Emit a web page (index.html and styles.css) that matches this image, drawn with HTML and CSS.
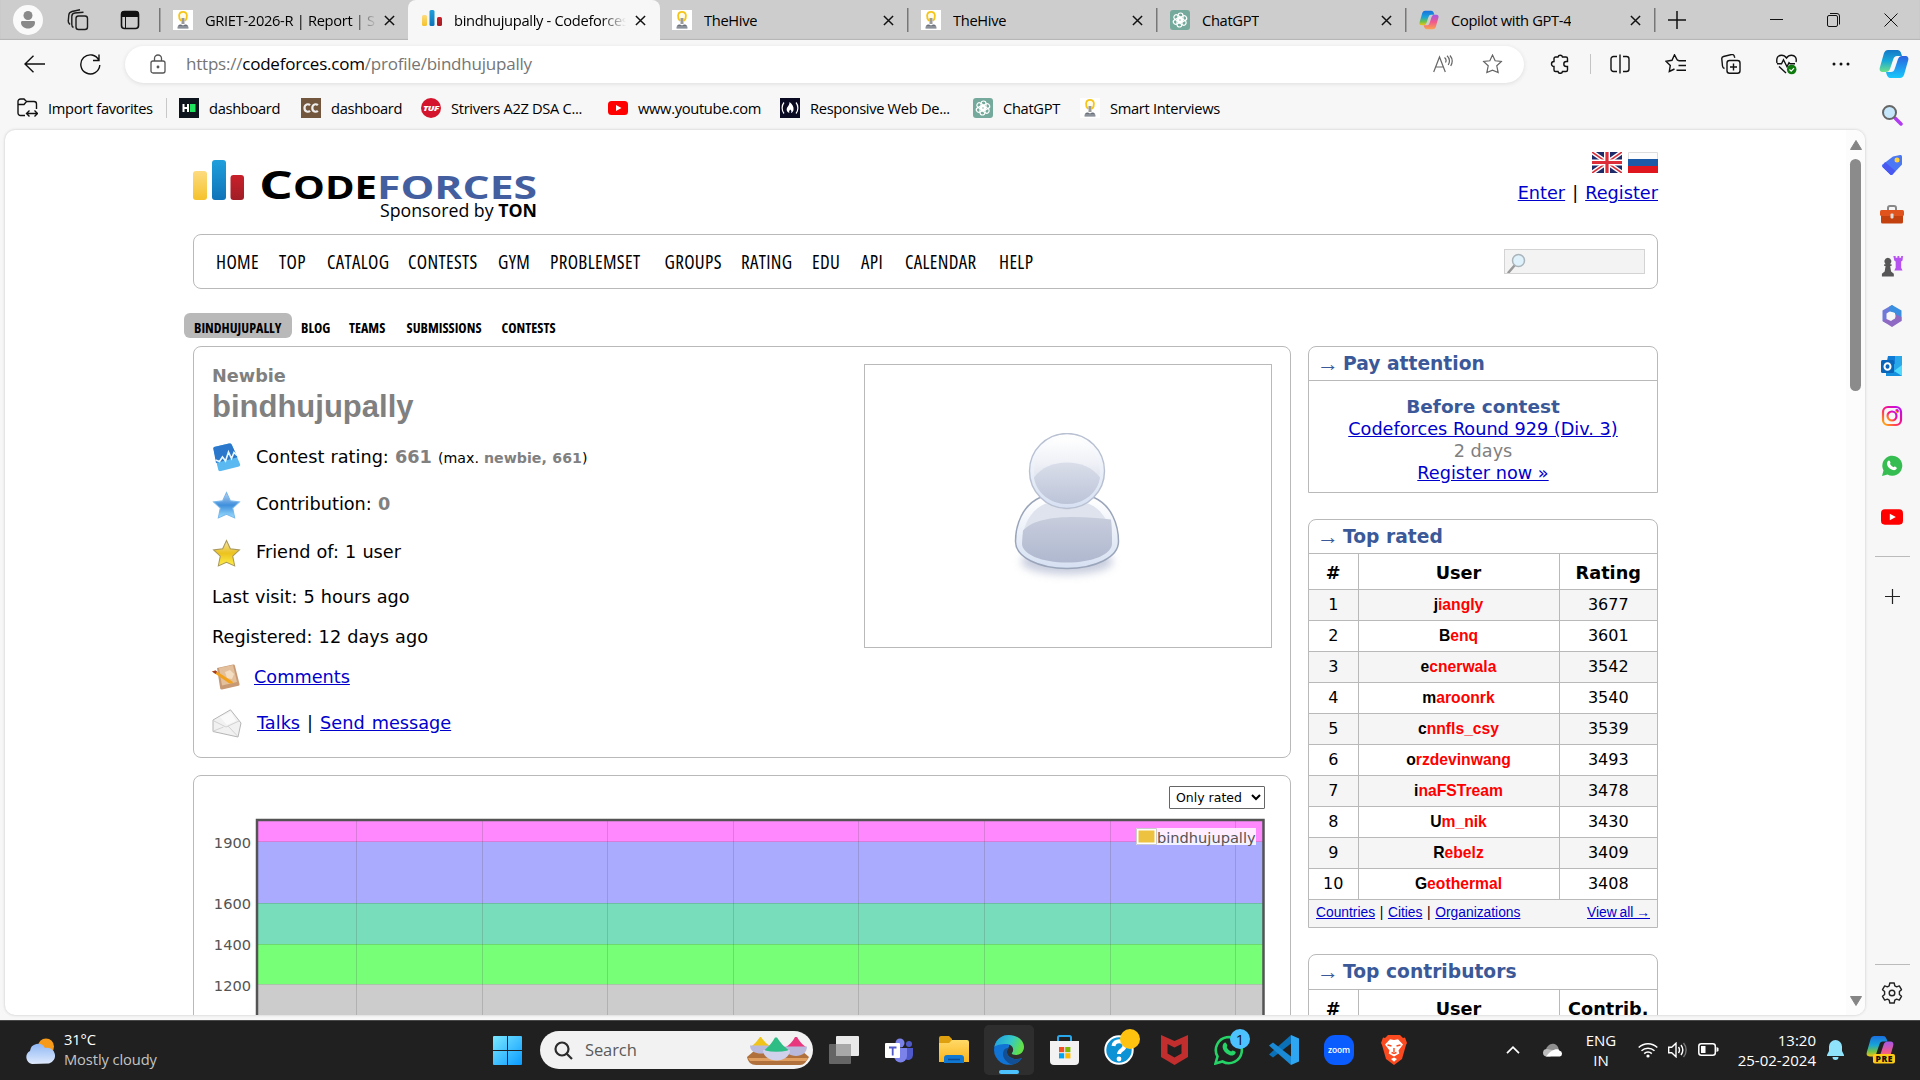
FILE: index.html
```html
<!DOCTYPE html>
<html lang="en">
<head>
<meta charset="utf-8">
<title>bindhujupally - Codeforces</title>
<link rel="stylesheet" href="styles.css">
</head>
<body>
<svg class="defs" width="0" height="0">
  <defs>
    <linearGradient id="gBlue" x1="0" y1="0" x2="0" y2="1"><stop offset="0" stop-color="#1f9fdc"/><stop offset="1" stop-color="#0f73b8"/></linearGradient>
    <linearGradient id="gYellow" x1="0" y1="0" x2="0" y2="1"><stop offset="0" stop-color="#fddb80"/><stop offset="1" stop-color="#f5c22b"/></linearGradient>
    <linearGradient id="gRed" x1="0" y1="0" x2="0" y2="1"><stop offset="0" stop-color="#c9202a"/><stop offset="1" stop-color="#a01e26"/></linearGradient>
    <linearGradient id="gCopA" x1="0" y1="0" x2="0" y2="1"><stop offset="0" stop-color="#1a6fe0"/><stop offset=".45" stop-color="#18a5d8"/><stop offset=".75" stop-color="#6fc04a"/><stop offset="1" stop-color="#f2c512"/></linearGradient>
    <linearGradient id="gCopB" x1="0" y1="0" x2="0" y2="1"><stop offset="0" stop-color="#a457e8"/><stop offset=".5" stop-color="#f0598c"/><stop offset="1" stop-color="#fba34f"/></linearGradient>
    <linearGradient id="gCopC" x1="0" y1="0" x2="0" y2="1"><stop offset="0" stop-color="#1277c8"/><stop offset=".5" stop-color="#18a9d8"/><stop offset="1" stop-color="#6fe08a"/></linearGradient>
    <linearGradient id="gCopD" x1="0" y1="0" x2="0" y2="1"><stop offset="0" stop-color="#2b63e0"/><stop offset="1" stop-color="#18c8fb"/></linearGradient>
    <linearGradient id="gIg" x1="0" y1="1" x2="1" y2="0"><stop offset="0" stop-color="#ffb800"/><stop offset=".5" stop-color="#ff1080"/><stop offset="1" stop-color="#b010ff"/></linearGradient>
    <linearGradient id="gWin" x1="0" y1="0" x2="1" y2="1"><stop offset="0" stop-color="#7be8ff"/><stop offset="1" stop-color="#0a9bff"/></linearGradient>
    <linearGradient id="gStarB" x1="0" y1="0" x2="0" y2="1"><stop offset="0" stop-color="#bcd3f0"/><stop offset=".5" stop-color="#3f8fdc"/><stop offset="1" stop-color="#9be0ff"/></linearGradient>
    <linearGradient id="gStarY" x1="0" y1="0" x2="0" y2="1"><stop offset="0" stop-color="#f2e6a8"/><stop offset=".5" stop-color="#ecc21e"/><stop offset="1" stop-color="#fff04a"/></linearGradient>
    <linearGradient id="gHead" x1="0" y1="0" x2="0" y2="1"><stop offset="0" stop-color="#fff"/><stop offset=".4" stop-color="#eef0f6"/><stop offset="1" stop-color="#c6cde0"/></linearGradient>
    <linearGradient id="gHeadLow" x1="0" y1="0" x2="0" y2="1"><stop offset="0" stop-color="#dadeea"/><stop offset="1" stop-color="#bcc4d8"/></linearGradient>
    <linearGradient id="gBody" x1="0" y1="0" x2="0" y2="1"><stop offset="0" stop-color="#c8cddd"/><stop offset="1" stop-color="#afb8cf"/></linearGradient>
    <linearGradient id="gRim" x1="0" y1="0" x2="0" y2="1"><stop offset="0" stop-color="#fff"/><stop offset="1" stop-color="#d5e0f2"/></linearGradient>
    <linearGradient id="gCloud" x1="0" y1="0" x2="0" y2="1"><stop offset="0" stop-color="#8fb7f5"/><stop offset="1" stop-color="#dfeafd"/></linearGradient>
    <linearGradient id="gFolder" x1="0" y1="0" x2="0" y2="1"><stop offset="0" stop-color="#ffd968"/><stop offset="1" stop-color="#f9b51c"/></linearGradient>
    <linearGradient id="gEdge" x1="0" y1="0" x2="1" y2=".3"><stop offset="0" stop-color="#1f9be0"/><stop offset=".6" stop-color="#35c8c8"/><stop offset="1" stop-color="#62e04a"/></linearGradient>
    <filter id="soft" x="-30%" y="-100%" width="160%" height="300%"><feGaussianBlur stdDeviation="4"/></filter>
    <symbol id="bulb" viewBox="0 0 20 20"><path fill="#fff" d="M0 0h20v20H0z"/><path d="M8 11C5.300 8 5 1.800 10 1.800S14.700 8 12 11" fill="#fffbe8" stroke="#f5c518" stroke-width="1.800"/><path d="M8.500 8h3v6h-3z" fill="#9a9a9a"/><path d="M4.500 18.500c0-3 1.500-4.500 3.500-4l2 1 2-1c2-.5 3.500 1 3.500 4z" fill="#6c727c"/><path d="M5 17h10" stroke="#a8adb5"/></symbol>
    <symbol id="gpt" viewBox="0 0 20 20"><rect width="20" height="20" rx="3" fill="#75a99b"/><g fill="none" stroke="#fff" stroke-width="1.200"><g id="petal"><rect x="8" y="3" width="5" height="8.500" rx="2.500"/></g><use href="#petal" transform="rotate(60 10 10)"/><use href="#petal" transform="rotate(120 10 10)"/><use href="#petal" transform="rotate(180 10 10)"/><use href="#petal" transform="rotate(240 10 10)"/><use href="#petal" transform="rotate(300 10 10)"/></g></symbol>
    <symbol id="copilot" viewBox="0 0 30 30"><path d="M9 1h9c3 0 4 2 5 6h-5c-2 0-3 1-4 4l-3 9c-1 2-2 3-4 3H4c-3 0-4-2-3-5L5 4c1-2 2-3 4-3z" fill="url(#gCopA)"/><path d="M21 29h-9c-3 0-4-2-5-6h5c2 0 3-1 4-4l3-9c1-2 2-3 4-3h3c3 0 4 2 3 5l-4 14c-1 2-2 3-4 3z" fill="url(#gCopB)"/></symbol>
    <symbol id="copilotBlue" viewBox="0 0 30 30"><path d="M9 1h9c3 0 4 2 5 6h-5c-2 0-3 1-4 4l-3 9c-1 2-2 3-4 3H4c-3 0-4-2-3-5L5 4c1-2 2-3 4-3z" fill="url(#gCopC)"/><path d="M21 29h-9c-3 0-4-2-5-6h5c2 0 3-1 4-4l3-9c1-2 2-3 4-3h3c3 0 4 2 3 5l-4 14c-1 2-2 3-4 3z" fill="url(#gCopD)"/></symbol>
    <symbol id="yt" viewBox="0 0 20 20"><rect y="3" width="20" height="14" rx="3.500" fill="red"/><path d="M8 7l5.500 3L8 13z" fill="#fff"/></symbol>
    <symbol id="x" viewBox="0 0 12 12"><path d="M1 1l10 10M11 1L1 11" stroke="#111" stroke-width="1.600" fill="none"/></symbol>
    <symbol id="star" viewBox="0 0 28 28"><path d="M14 1.500l3.700 8 8.800 1-6.500 6 1.900 9.500-7.900-3.500L6.100 26 8 16.500l-6.500-6 8.800-1z"/></symbol>
  </defs>
</svg>

<div class="tabs">
  <div class="tabtools">
    <svg width="30" height="30" viewBox="0 0 30 30"><circle cx="15" cy="15" r="15" fill="#fafafa"/><circle cx="15" cy="10.500" r="4.500" fill="#8a8a8a"/><path d="M8 17.500c0-1 .5-1.500 1.500-1.500h11c1 0 1.500.5 1.500 1.500 0 3.500-3 6-7 6s-7-2.500-7-6z" fill="#8a8a8a"/></svg>
    <svg class="t2" width="22" height="22" viewBox="0 0 22 22" fill="none" stroke="#1c1c1c" stroke-width="1.400"><rect x="9" y="7" width="11.500" height="13.500" rx="2.500"/><path d="M6.500 18.500c-1.300-.6-1.700-1.500-1.700-3V7.500c0-2.600 1.200-3.300 3-3.500l8.700-.7M3 15.500l-1-1.300a3 3 0 0 1-.7-2.500l.5-5.700c.2-2.400 1.500-3 3.200-3.500L13 .8"/></svg>
    <svg class="t3" width="20" height="20" viewBox="0 0 20 20"><rect x="1.500" y="1.500" width="17" height="17" rx="3" fill="none" stroke="#111" stroke-width="1.600"/><path d="M1 7V4a3 3 0 0 1 3-3h12a3 3 0 0 1 3 3v3z" fill="#111"/><path d="M5.500 7v11" stroke="#111"/></svg>
  </div>
  <div class="tab first"><svg width="20" height="20"><use href="#bulb"/></svg><span class="fade">GRIET-2026-R | Report | S</span><svg class="cl" width="11" height="11"><use href="#x"/></svg></div>
  <div class="tab active"><svg width="20" height="20" viewBox="0 0 20 20"><rect y="5" width="5" height="11" rx="1.500" fill="url(#gYellow)"/><rect x="7.500" width="5" height="16" rx="1.500" fill="url(#gBlue)"/><rect x="15" y="7" width="5" height="9" rx="1.500" fill="url(#gRed)"/></svg><span class="fade">bindhujupally - Codeforces</span><svg class="cl" width="11" height="11"><use href="#x"/></svg></div>
  <div class="tab"><svg width="20" height="20"><use href="#bulb"/></svg><span>TheHive</span><svg class="cl" width="11" height="11"><use href="#x"/></svg></div>
  <div class="tab sep"><svg width="20" height="20"><use href="#bulb"/></svg><span>TheHive</span><svg class="cl" width="11" height="11"><use href="#x"/></svg></div>
  <div class="tab sep"><svg width="20" height="20"><use href="#gpt"/></svg><span>ChatGPT</span><svg class="cl" width="11" height="11"><use href="#x"/></svg></div>
  <div class="tab sep"><svg width="20" height="20"><use href="#copilot"/></svg><span>Copilot with GPT-4</span><svg class="cl" width="11" height="11"><use href="#x"/></svg></div>
  <div class="newtab"><svg width="18" height="18" viewBox="0 0 18 18" stroke="#111" stroke-width="1.500"><path d="M9 0v18M0 9h18"/></svg></div>
  <div class="wincontrols">
    <svg width="13" height="14" viewBox="0 0 13 14" stroke="#111"><path d="M0 6.500h13"/></svg>
    <svg width="13" height="14" viewBox="0 0 13 14" fill="none" stroke="#111"><rect x=".5" y="2.500" width="10" height="11" rx="1.500"/><path d="M3 .5h7a2.500 2.500 0 0 1 2.500 2.500v8.500"/></svg>
    <svg width="14" height="14" viewBox="0 0 14 14" stroke="#111"><path d="M.5.500l13 13M13.500.500l-13 13"/></svg>
  </div>
</div>

<div class="toolbar">
  <svg class="back" width="21" height="18" viewBox="0 0 21 18" fill="none" stroke="#111" stroke-width="1.400"><path d="M21 9H1M9.500.700L1 9l8.500 8.300"/></svg>
  <svg class="reload" width="22" height="22" viewBox="0 0 22 22" fill="none" stroke="#111" stroke-width="1.400"><path d="M20 7.500A9.500 9.500 0 1 0 20.800 12M20 1.500v6h-6"/></svg>
  <div class="address">
    <svg width="16" height="20" viewBox="0 0 16 20" fill="none" stroke="#555" stroke-width="1.300"><rect x="1" y="7" width="14" height="12" rx="2"/><path d="M4.500 7V4.500a3.500 3.500 0 0 1 7 0V7"/><circle cx="8" cy="13" r=".8" fill="#555"/></svg>
    <span class="url">https://<b>codeforces.com</b>/profile/bindhujupally</span>
    <svg width="20" height="18" viewBox="0 0 20 18" fill="none" stroke="#666" stroke-width="1.200"><path d="M.700 17L6.500 2l5.800 15M2.800 12h7.500M11.500 2.500c1.500 1.200 1.800 3.500 1 5M14 .8c2.500 2.200 3 6 1.200 9.200M17 .5c2.500 3 2.800 7 .7 10.500"/></svg>
    <svg class="fav" width="21" height="20" viewBox="0 0 28 28" fill="none" stroke="#666" stroke-width="1.700"><use href="#star"/></svg>
  </div>
  <div class="tools">
    <svg width="20" height="20" viewBox="0 0 20 20" fill="none" stroke="#111" stroke-width="1.400"><path d="M6 3h2a2.300 2.300 0 0 1 4.500 0H16a1.500 1.500 0 0 1 1.500 1.500V7.500h-1.200a2.500 2.500 0 0 0 0 5h1.200v3.500a1.500 1.500 0 0 1-1.500 1.500h-3.500a2.300 2.300 0 0 1-4.500 0H5.500A1.500 1.500 0 0 1 4 16v-3.500a2.500 2.500 0 0 1 0-5v-3A1.500 1.500 0 0 1 5.500 3z"/></svg>
    <i></i>
    <svg width="20" height="20" viewBox="0 0 20 20" fill="none" stroke="#111" stroke-width="1.400"><path d="M7 2.500H3.500A2.500 2.500 0 0 0 1 5v10a2.500 2.500 0 0 0 2.500 2.500H7M13 2.500h3.500A2.500 2.500 0 0 1 19 5v10a2.500 2.500 0 0 1-2.500 2.500H13M10 .5v19"/></svg>
    <svg class="w" width="22" height="20" viewBox="0 0 22 20" fill="none" stroke="#111" stroke-width="1.400"><path d="M13.500 6.500L12.300 6 9.500.800 7 6.300 1 7.200l4.300 4.200-1 6.100L9.500 15M13.500 6.800H21M13.500 11.500H21M11.500 16.200H21"/></svg>
    <svg class="w2" width="20" height="20" viewBox="0 0 20 20" fill="none" stroke="#111" stroke-width="1.400"><rect x="6" y="6.500" width="13" height="12.800" rx="2.500"/><path d="M12.500 9.500v7M9 13h7M3.500 14.500a3 3 0 0 1-2-2.500L.800 5A2.300 2.300 0 0 1 2.500 2.500l8-2a2.300 2.300 0 0 1 2.800 1.700l.5 1.500"/></svg>
    <svg class="w3" width="21" height="21" viewBox="0 0 21 21" fill="none" stroke="#111" stroke-width="1.400"><path d="M1 9C0 4 2 1.200 5.500 1.200c2.300 0 4 1.300 5 2.800 1-1.500 2.700-2.800 5-2.800C19 1.200 21 4 20 8M3 12.500L10 19M1 9.800h4.500l2-4 3.500 7 2-4 1 1h5"/><circle cx="15.700" cy="15.500" r="4.800" fill="#0f7b0f" stroke="none"/><path d="M13.500 15.500l1.700 1.600 2.800-3" stroke="#fff" stroke-width="1.200"/></svg>
    <svg class="w4" width="18" height="20" viewBox="0 0 18 20" fill="#111"><circle cx="2" cy="10" r="1.500"/><circle cx="9" cy="10" r="1.500"/><circle cx="16" cy="10" r="1.500"/></svg>
    <svg class="w5" width="30" height="30"><use href="#copilotBlue"/></svg>
  </div>
</div>

<div class="bookmarks">
  <div class="bm imp"><svg width="21" height="20" viewBox="0 0 21 20" fill="none" stroke="#111" stroke-width="1.400"><path d="M8 17.500H3.500A2.500 2.500 0 0 1 1 15V3.500A2.500 2.500 0 0 1 3.500 1H7l2.500 2.500H17A2.500 2.500 0 0 1 19.500 6v5M1 6.500h6l2.500-3M10 15.500h10M12.500 12.500l-3 3 3 3M17.500 12.500l3 3-3 3"/></svg><span>Import favorites</span></div>
  <div class="bm b1"><svg width="20" height="20" viewBox="0 0 20 20"><path fill="#0e141e" d="M0 0h20v20H0z"/><path fill="#fff" d="M3.500 6h2v3h2.500V6h2v8H8v-3H5.500v3h-2z"/><path fill="#1fe25f" d="M11 6h5.500v8H11z"/></svg><span>dashboard</span></div>
  <div class="bm b2"><svg width="20" height="20" viewBox="0 0 20 20"><path fill="#73563e" d="M0 0h20v20H0z"/><g fill="none" stroke="#eee" stroke-width="2.200"><path d="M9 7.300C7.500 5.500 3.500 6 3.500 10s4 4.500 5.500 2.700M16.800 7.300C15.300 5.500 11.300 6 11.300 10s4 4.500 5.500 2.700"/></g></svg><span>dashboard</span></div>
  <div class="bm b3"><svg width="20" height="20" viewBox="0 0 20 20"><circle cx="10" cy="10" r="10" fill="#d4142c"/><text x="2" y="12.500" font-family="Open Sans" font-size="7" font-weight="800" font-style="italic" fill="#fff" textLength="16" lengthAdjust="spacingAndGlyphs">TUF</text></svg><span>Strivers A2Z DSA C...</span></div>
  <div class="bm b4"><svg width="20" height="20"><use href="#yt"/></svg><span>www.youtube.com</span></div>
  <div class="bm b5"><svg width="20" height="20" viewBox="0 0 20 20"><path fill="#0a0a23" d="M0 0h20v20H0z"/><path d="M4 4.500c-2.500 3-2.500 8 0 11M16 4.500c2.500 3 2.500 8 0 11" fill="none" stroke="#fff" stroke-width="1.200"/><path d="M9.500 4c3 2 4.500 5 4 8-.3 1.600-1.500 2.800-2.500 3 1-2 0-3-1-3.500-.5 1.500-1.500 2-.5 3.500-3-1-3.500-4-2-6C9 7 9.500 6 9.500 4z" fill="#fff"/></svg><span>Responsive Web De...</span></div>
  <div class="bm b6"><svg width="20" height="20"><use href="#gpt"/></svg><span>ChatGPT</span></div>
  <div class="bm b7"><svg width="20" height="20"><use href="#bulb"/></svg><span>Smart Interviews</span></div>
</div>

<div class="main">
  <div class="page">
    <div class="content">
      <header class="head">
        <svg width="345" height="66" viewBox="0 0 345 66">
          <rect x="0" y="14" width="14" height="29" rx="3" fill="url(#gYellow)"/><rect x="19" y="3" width="14" height="40" rx="3" fill="url(#gBlue)"/><rect x="37.500" y="18" width="13.500" height="25" rx="3" fill="url(#gRed)"/>
          <g font-family="Open Sans, sans-serif" font-weight="700"><text x="66" y="41.500" font-size="38.500" textLength="34" lengthAdjust="spacingAndGlyphs">C</text><text x="100" y="41.500" font-size="32" textLength="84" lengthAdjust="spacingAndGlyphs">ODE</text><text x="184" y="41.500" font-size="32" fill="#445fa0" textLength="160" lengthAdjust="spacingAndGlyphs">FORCES</text></g>
          <text x="187" y="59.500" font-family="Open Sans, sans-serif" font-size="17.500" textLength="157" lengthAdjust="spacingAndGlyphs">Sponsored by <tspan font-weight="700">TON</tspan></text>
        </svg>
        <div class="auth">
          <div class="flags">
            <svg width="30" height="21" viewBox="0 0 30 21"><path fill="#1f2a68" d="M0 0h30v21H0z"/><path d="M0 0l30 21M30 0L0 21" stroke="#fff" stroke-width="4.500"/><path d="M0 0l30 21M30 0L0 21" stroke="#d8303a" stroke-width="1.600"/><path d="M15 0v21M0 10.500h30" stroke="#fff" stroke-width="6"/><path d="M15 0v21M0 10.500h30" stroke="#dc2d38" stroke-width="3.200"/></svg>
            <svg width="30" height="21" viewBox="0 0 30 21"><path fill="#fdfdfd" stroke="#ddd" d="M.5.500h29v20H.5z"/><path fill="#1c5aa8" d="M0 7h30v7H0z"/><path fill="#e0161e" d="M0 14h30v7H0z"/></svg>
          </div>
          <div class="links"><a>Enter</a> | <a>Register</a></div>
        </div>
      </header>
      <nav class="menu">
        <a class="m1">HOME</a><a class="m2">TOP</a><a class="m3">CATALOG</a><a class="m4">CONTESTS</a><a class="m5">GYM</a><a class="m6">PROBLEMSET</a><a class="m7">GROUPS</a><a class="m8">RATING</a><a class="m9">EDU</a><a class="m10">API</a><a class="m11">CALENDAR</a><a class="m12">HELP</a>
        <div class="search"><svg width="20" height="20" viewBox="0 0 20 20"><path d="M1.500 19.500l6-7" stroke="#999" stroke-width="2.500" stroke-linecap="round"/><circle cx="11.500" cy="7.500" r="6" fill="#dff2fc" stroke="#aab4ba" stroke-width="1.500"/></svg></div>
      </nav>
      <nav class="sub"><a class="on">BINDHUJUPALLY</a><a class="s2">BLOG</a><a class="s3">TEAMS</a><a class="s4">SUBMISSIONS</a><a class="s5">CONTESTS</a></nav>
      <div class="cols">
        <div class="left">
          <section class="card profile">
            <div class="info">
              <div class="rank">Newbie</div>
              <div class="name">bindhujupally</div>
              <div class="row"><svg width="29" height="29" viewBox="0 0 29 29"><path d="M1.500 6.500C1 5 1.500 4 3 3.700L17 .5c1.500-.3 2.500.3 3 1.700L28 21c.5 1.300 0 2-1 2.500L9 28c-1.500.4-2.500 0-2.800-1.500z" fill="#59b9f0"/><path d="M1.500 6.500C1 5 1.500 4 3 3.700L17 .5c1.500-.3 2.500.3 3 1.700l5.500 12L4 20z" fill="#2a77cb"/><path d="M3.500 17l4 1.500 3-4.500 3 4 3-9 3 6.500 2.500-6 3 3" fill="none" stroke="#e8f8ff" stroke-width="1.600"/></svg><span>Contest rating: <b>661</b> <small>(max. <b>newbie, 661</b>)</small></span></div>
              <div class="row"><svg width="29" height="29" viewBox="0 0 28 28" fill="url(#gStarB)" stroke="#7ab8ec"><use href="#star"/></svg><span class="up">Contribution: <b>0</b></span></div>
              <div class="row"><svg width="29" height="29" viewBox="0 0 28 28" fill="url(#gStarY)" stroke="#a8975a"><use href="#star"/></svg><span class="up">Friend of: 1 user</span></div>
              <div class="line">Last visit: 5 hours ago</div>
              <div class="line">Registered: 12 days ago</div>
              <div class="row cm"><svg width="29" height="26" viewBox="0 0 29 26"><path d="M5 4l16-3.500c1-.2 1.700.2 2 1.500l4.500 18c.2 1-.2 1.600-1 1.800L10 25.500c-1 .2-1.600-.2-1.800-1z" fill="#c79a75"/><path d="M7 4l14-3 4 17-15 3.500z" fill="#e3c09b"/><path d="M13 8l5-2 4 4-2 5-5-1z" fill="#f3dec4"/><path d="M0 7.500l3.500-1L21 18l-1 1.800-3-.5z" fill="#f2a11c"/><path d="M0 7.500l3.500-1 1.500 1L3.500 10z" fill="#a33b2a"/></svg><span><a>Comments</a></span></div>
              <div class="row tk"><svg width="30" height="29" viewBox="0 0 30 29" stroke="#b5b5b5"><path d="M1 11L18.500.800 29 14l-3 14L1 22.500z" fill="#f1f1f1"/><path d="M2 12l12 6 13-6M1.500 22l10-4M25.500 27L16 17" fill="none" stroke="#d2d2d2"/><path d="M8 8l11-5 5 9-9 4z" fill="#fafafa" stroke="none"/></svg><span class="links"><a>Talks</a> | <a>Send message</a></span></div>
            </div>
            <div class="avatar">
              <svg width="130" height="160" viewBox="0 -4.500 130 160">
                <ellipse cx="65" cy="124" rx="46" ry="13" fill="#aab2cc" opacity=".65" filter="url(#soft)"/>
                <path d="M38 60C20 68 13.500 88 13.500 104c0 16 24 27 51.500 27s51.500-11 51.500-27c0-16-6.500-36-24.500-44z" fill="url(#gRim)" stroke="#9aa5ba" stroke-width="1.500"/>
                <path d="M44 66C28 72 20 90 20 106c0 11 20 19 45 19s45-8 45-19c0-16-8-34-24-40z" fill="#dfe3ed"/>
                <path d="M21 93c14-16 55-15 88-11 1 7 1 15 1 24 0 11-20 19-45 19s-45-8-45-19z" fill="url(#gBody)"/>
                <circle cx="65" cy="33.500" r="37.500" fill="url(#gRim)" stroke="#b8c0d2" stroke-width="1.400"/>
                <circle cx="65" cy="33.500" r="33" fill="url(#gHead)"/>
                <path d="M32 40c14-20 52-20 66 0-2 15-16 26.500-33 26.500S34 55 32 40z" fill="url(#gHeadLow)"/>
              </svg>
            </div>
          </section>
          <section class="card graph">
            <select><option>Only rated</option></select>
            <svg class="plot" width="1096" height="200" viewBox="194 818 1096 200">
              <path fill="#f8f" d="M257 820h1007v22H257z"/><path fill="#aaf" d="M257 842h1007v61H257z"/><path fill="#77ddbb" d="M257 903h1007v41H257z"/><path fill="#7f7" d="M257 944h1007v40.500H257z"/><path fill="#ccc" d="M257 984.500h1007v40H257z"/>
              <path d="M356.500 820v200M482.500 820v200M607.500 820v200M733.500 820v200M858.500 820v200M984.500 820v200M1110.500 820v200M1235.500 820v200M257 841.500h1007M257 903.500h1007M257 944.500h1007M257 984.500h1007" stroke="#545454" stroke-opacity=".22" fill="none"/>
              <path d="M257 1020V820h1006.500v200" fill="none" stroke="#545454" stroke-width="2.500"/>
              <path fill="#fff" fill-opacity=".85" d="M1136 828h120v17h-120z"/><path d="M1136.500 828.500h20v16h-20z" fill="#fff" stroke="#ccc"/><path fill="#edc240" d="M1138.500 830.500h16v12h-16z"/>
              <g fill="#545454" font-family="DejaVu Sans, sans-serif" font-size="14.600"><text x="1157" y="843">bindhujupally</text><g text-anchor="end"><text x="251" y="848">1900</text><text x="251" y="909">1600</text><text x="251" y="950">1400</text><text x="251" y="991">1200</text></g></g>
            </svg>
          </section>
        </div>
        <aside class="right">
          <div class="box attention">
            <h3><i>→</i>Pay attention</h3>
            <div class="body"><strong>Before contest</strong><a>Codeforces Round 929 (Div. 3)</a><em>2 days</em><a>Register now »</a></div>
          </div>
          <div class="box rated">
            <h3><i>→</i>Top rated</h3>
            <table>
              <tr><th class="n">#</th><th>User</th><th class="r">Rating</th></tr>
              <tr><td>1</td><td class="u"><b>j</b>iangly</td><td>3677</td></tr>
              <tr><td>2</td><td class="u"><b>B</b>enq</td><td>3601</td></tr>
              <tr><td>3</td><td class="u"><b>e</b>cnerwala</td><td>3542</td></tr>
              <tr><td>4</td><td class="u"><b>m</b>aroonrk</td><td>3540</td></tr>
              <tr><td>5</td><td class="u"><b>c</b>nnfls_csy</td><td>3539</td></tr>
              <tr><td>6</td><td class="u"><b>o</b>rzdevinwang</td><td>3493</td></tr>
              <tr><td>7</td><td class="u"><b>i</b>naFSTream</td><td>3478</td></tr>
              <tr><td>8</td><td class="u"><b>U</b>m_nik</td><td>3430</td></tr>
              <tr><td>9</td><td class="u"><b>R</b>ebelz</td><td>3409</td></tr>
              <tr><td>10</td><td class="u"><b>G</b>eothermal</td><td>3408</td></tr>
            </table>
            <div class="foot"><span><a>Countries</a> | <a>Cities</a> | <a>Organizations</a></span><a>View all →</a></div>
          </div>
          <div class="box contrib">
            <h3><i>→</i>Top contributors</h3>
            <table><tr><th class="n">#</th><th>User</th><th class="r">Contrib.</th></tr></table>
          </div>
        </aside>
      </div>
    </div>
    <div class="scroll">
      <svg width="12" height="10" viewBox="0 0 12 10"><path d="M6 .5L11.500 9.500H.5z" fill="#858585" stroke="#858585" stroke-linejoin="round"/></svg>
      <div class="thumb"></div>
      <svg width="12" height="10" viewBox="0 0 12 10"><path d="M6 9.500L11.500.5H.5z" fill="#858585" stroke="#858585" stroke-linejoin="round"/></svg>
    </div>
  </div>
  <div class="side">
    <svg width="22" height="22" viewBox="0 0 22 22"><path d="M14 14l6 6" stroke="#b03bf0" stroke-width="3.500" stroke-linecap="round"/><circle cx="8.500" cy="8.500" r="6.500" fill="#c5e6fb" stroke="#666" stroke-width="2"/></svg>
    <svg width="22" height="22" viewBox="0 0 22 22"><path d="M12 2.500l7-1.500c1.500 0 2 .5 2 2v7.500L11.500 20.500c-.8.800-1.500.8-2.300 0L1.500 13c-.8-.8-.8-1.700 0-2.500z" fill="#4a78f5"/><path d="M1.500 13l7.700 7.500c.8.800 1.500.8 2.300 0l3-3.500L4 8z" fill="#4a58f2"/><circle cx="16" cy="6" r="2.500" fill="#ffd23c"/></svg>
    <svg width="24" height="20" viewBox="0 0 24 20"><path d="M8 5V3a2 2 0 0 1 2-2h4a2 2 0 0 1 2 2v2" fill="none" stroke="#888" stroke-width="2"/><rect x="1" y="9" width="22" height="9.500" rx="1.500" fill="#c2410f"/><rect y="5" width="24" height="6" rx="1.500" fill="#e0531c"/><rect x="10.500" y="8.500" width="3" height="5" rx="1" fill="#ddd"/></svg>
    <svg width="24" height="24" viewBox="0 0 24 24"><path d="M13.500 1h2.500v2h2V1h2v2h2V1h2l-.5 5-1.500 1v7l1.500 3h-9l1.500-3V7l-1.500-1z" fill="#b653f0"/><path d="M7.500 3a4 4 0 0 1 2.500 7h1.500v2H10l1 6 3 2.500v3H1v-3L4 18l1-6H3.500v-2H5a4 4 0 0 1 2.500-7z" fill="#565656"/></svg>
    <svg width="22" height="22" viewBox="0 0 22 22"><path d="M11 0L1.500 5.500V16l4 2.500V8.500L14 3z" fill="#6f7ad8"/><path d="M11 0l9.500 5.500V16L14 11V8L7.500 6l1-4.500z" fill="#3a8fe0"/><path d="M1.500 16L11 22l9.500-6v-4L14 9v4l-4 3-4.500-2z" fill="#8f6ac4"/><circle cx="11" cy="11" r="3.500" fill="#f7f7f7"/></svg>
    <svg width="22" height="22" viewBox="0 0 22 22"><path d="M7 1h14v20H5V8z" fill="#28a8ea"/><path d="M7 1h7v8H7z" fill="#0f7bd4"/><path d="M5 12l8 5 8-5v9H5z" fill="#1490df"/><path d="M21 10v11l-8-5z" fill="#50d9ff"/><rect y="5" width="13" height="13" rx="1.500" fill="#0a64b8"/><ellipse cx="6.500" cy="11.500" rx="3" ry="3.300" fill="none" stroke="#fff" stroke-width="2"/></svg>
    <svg width="22" height="22" viewBox="0 0 22 22" fill="none" stroke="url(#gIg)" stroke-width="2.200"><rect x="2" y="2" width="18" height="18" rx="5"/><circle cx="11" cy="11" r="4.500"/><circle cx="16" cy="6" r=".8" fill="#d010e0"/></svg>
    <svg width="22" height="22" viewBox="0 0 22 22"><path d="M1 21l1.500-5.500A10 10 0 1 1 6.500 19.500z" fill="#35bd51"/><path d="M7 6c1-1 1.500-.5 2 .5s.8 1.500 0 2.300c.5 1.500 2 2.800 3.500 3.500.8-1 1.200-1 2.200-.4s1.500.8.9 1.900c-.8 1.500-2.600 1.700-4.500 1-3-1.200-4.600-3.300-5-5.300C5.900 8 6.200 6.800 7 6z" fill="#fff"/></svg>
    <svg width="22" height="22" viewBox="0 0 20 20"><use href="#yt"/></svg>
    <hr>
    <svg class="plus" width="15" height="15" viewBox="0 0 15 15" stroke="#222" stroke-width="1.200"><path d="M7.500 0v15M0 7.500h15"/></svg>
    <hr class="low">
    <svg class="gear" width="22" height="22" viewBox="0 0 22 22" fill="none" stroke="#222" stroke-width="1.400"><path d="M8.800 1h4.400l.6 2.800 1.800 1 2.700-.9 2.200 3.800-2.100 1.900v2.800l2.100 1.900-2.200 3.800-2.700-.9-1.800 1-.6 2.800H8.800l-.6-2.800-1.800-1-2.700.9-2.200-3.800 2.100-1.900V9.600L1.500 7.700l2.200-3.800 2.700.9 1.800-1z" stroke-linejoin="round"/><circle cx="11" cy="11" r="2.800"/></svg>
  </div>
</div>

<div class="taskbar">
  <div class="weather">
    <svg width="30" height="26" viewBox="0 0 30 26"><circle cx="21" cy="8.500" r="8" fill="#f79a1a"/><path d="M7 26a7 7 0 0 1-2-13 8 8 0 0 1 15-3 8 8 0 0 1 4 15.500z" fill="url(#gCloud)"/></svg>
    <div><p>31°C</p><p class="dim">Mostly cloudy</p></div>
  </div>
  <svg class="start" width="29" height="29" viewBox="0 0 29 29" fill="url(#gWin)"><path d="M0 1a1 1 0 0 1 1-1h13v14H0zM15 0h13a1 1 0 0 1 1 1v13H15zM0 15h14v14H1a1 1 0 0 1-1-1zM15 15h14v13a1 1 0 0 1-1 1H15z"/></svg>
  <div class="find">
    <svg width="19" height="19" viewBox="0 0 19 19" fill="none" stroke="#2c2c2c" stroke-width="2.200"><circle cx="8" cy="8" r="6.500"/><path d="M12.500 12.500l5.500 5.500"/></svg>
    <span>Search</span>
    <svg width="62" height="29" viewBox="0 0 62 29"><path d="M7 15h48l7 6c-3 5-5 8-9 8H9c-5 0-8-3-9-8z" fill="#b0713c"/><path d="M1 22h60l-2 3H3z" fill="#e0a061"/><path d="M5 10Q9 7 13 1h1q4 6 9 9z" fill="#f0c419"/><path d="M3 9.500h21c0 5-4 8-10 8S3 15 3 9.500z" fill="#b9badb"/><path d="M39 11Q45 7 48 1h2q4 7 9 10z" fill="#e8377e"/><path d="M37 10.500h23c0 6-5 9.500-11 9.500s-12-3.500-12-9.500z" fill="#b9badb"/><path d="M17 14.500Q24 9 28 1.500h2q5 8 12 13z" fill="#2fbd86"/><path d="M16 14h27c0 6-6 10.500-13.500 10.500S16 20 16 14z" fill="#d0d1ea"/><path d="M18 14.500Q29 17 41 14.500L38 11H21z" fill="#2fbd86"/></svg>
  </div>
  <div class="apps">
    <div><svg width="30" height="28" viewBox="0 0 30 28"><rect x="7" width="23" height="20" rx="1" fill="#e9e9e9"/><rect y="8" width="22" height="20" rx="1" fill="#6b6b6b" opacity=".92"/><path d="M7 8h15v12H7z" fill="#a8a8a8"/></svg></div>
    <div><svg width="28" height="25" viewBox="0 0 28 25"><circle cx="15" cy="5" r="4.500" fill="#7b83eb"/><circle cx="24" cy="6" r="3" fill="#5059c9"/><path d="M19 10h9v7a5 5 0 0 1-8 4z" fill="#5059c9"/><path d="M9 10h13v8a6.500 6.500 0 0 1-13 0z" fill="#7b83eb"/><rect y="5" width="15" height="15" rx="1" fill="#fff"/><path d="M4 9.500h7.500M7.700 9.500v8" stroke="#5059c9" stroke-width="1.800"/></svg></div>
    <div><svg width="30" height="28" viewBox="0 0 30 28"><path d="M0 2a2 2 0 0 1 2-2h8l3 3v5H0z" fill="#dea00e"/><path d="M0 7h10l3-3h15a2 2 0 0 1 2 2v20H0z" fill="url(#gFolder)"/><path d="M5 27v-5a3 3 0 0 1 3-3h14a3 3 0 0 1 3 3v5z" fill="#1178d2"/><path d="M9 23.500h12" stroke="#0a4d94" stroke-width="1.600"/></svg></div>
    <div class="cur"><svg width="30" height="30" viewBox="0 0 30 30"><path d="M15 0a15 15 0 0 0-15 15 15 15 0 0 0 20 14c4-1 7-4 8-6-8 3-16-1-15-7 0-2 1-3 2-4z" fill="#1173d4"/><path d="M.3 12C2 3 9 0 15 0c9 0 15 6 15 12 0 5-4 8-8 8-3 0-5-1-4-2 3-4 0-9-6-9C7 9 2 10 .3 12z" fill="url(#gEdge)"/><path d="M10 15c-3 6 1 12 8 14.600 5-.6 8-4 10-6.600-7 3-15 0-15-6 0-2 1-3 2-4-2 0-4 .5-5 2z" fill="#134f94"/></svg></div>
    <div><svg width="29" height="30" viewBox="0 0 29 30"><path d="M8 6V2.500A1.500 1.500 0 0 1 9.500 1h10A1.500 1.500 0 0 1 21 2.500V6" fill="none" stroke="#28a8ea" stroke-width="2"/><path d="M0 6h29v20a4 4 0 0 1-4 4H4a4 4 0 0 1-4-4z" fill="#f2f2f2"/><path fill="#f25022" d="M9 12h5.200v5.200H9z"/><path fill="#7fba00" d="M15.200 12h5.200v5.200h-5.200z"/><path fill="#00a4ef" d="M9 18.200h5.200v5.200H9z"/><path fill="#ffb900" d="M15.200 18.200h5.200v5.200h-5.200z"/></svg></div>
    <div class="help"><svg width="30" height="30" viewBox="0 0 30 30"><circle cx="15" cy="15" r="13.700" fill="#0b93d6" stroke="#fff" stroke-width="2"/><path d="M9.500 11C10 4.500 20.500 4.500 20.500 11c0 4-5.500 4-5.500 8" fill="none" stroke="#fff" stroke-width="4"/><circle cx="15" cy="24" r="2.400" fill="#fff"/></svg><b class="dot"></b></div>
    <div><svg width="27" height="30" viewBox="0 0 27 30"><path d="M0 0l13.500 6L27 0v22l-13.500 8L0 22zM6.500 9v9.500l7 4 7-4V9l-7 3.500z" fill="#c22e2e" fill-rule="evenodd"/></svg></div>
    <div><svg width="30" height="30" viewBox="0 0 30 30"><path d="M1.500 28.500l2-7A13 13 0 1 1 8.500 26.500z" fill="none" stroke="#25d366" stroke-width="2.600"/><path d="M10 8c1-1 2-.5 2.700 1s1 2 0 3c.8 2 2.500 3.500 4.500 4.500 1-1.200 1.500-1.300 3-.5s2 1.200 1 2.700c-1 1.800-3.500 2.200-6 1.200-4-1.500-6-4.500-6.500-7.200C8.400 11 8.900 9 10 8z" fill="#25d366"/></svg><b class="dot blue">1</b></div>
    <div><svg width="30" height="30" viewBox="0 0 30 30"><path d="M22 0l8 3.500v23L22 30z" fill="#2fa6f2"/><path d="M22 0v8.500L4 22.500 0 19.500z" fill="#0a70b8"/><path d="M22 30v-8.500L4 7.500 0 10.500z" fill="#1a8ad6"/></svg></div>
    <div><svg width="30" height="30" viewBox="0 0 30 30"><rect width="30" height="30" rx="11" fill="#0b5cff"/><text x="4" y="17.500" font-family="Open Sans" font-weight="600" font-size="9" fill="#fff" textLength="22" lengthAdjust="spacingAndGlyphs">zoom</text></svg></div>
    <div><svg width="26" height="30" viewBox="0 0 26 30"><path d="M7 0h12l3 3 2-.5L26 8l-1 2-4 14-8 6-8-6L1 10 0 8l2-5.500L4 3z" fill="#fb4a1f"/><path d="M13 5l4-.7 5 5.200-4.500 6 .8 3L13 21.500 7.700 18.500l.8-3L4 9.500l5-5.200zM13 22.500l3 1.500-3 2.700L10 24z" fill="#fff"/><path d="M6.500 10l4 1M19.500 10l-4 1M13 13v4M10.500 17.500l2.500 1 2.500-1" stroke="#fb4a1f" stroke-width="1.400" fill="none"/></svg></div>
  </div>
  <div class="tray">
    <svg class="chev" width="14" height="8" viewBox="0 0 14 8" fill="none" stroke="#fff" stroke-width="1.700"><path d="M1 7.200L7 1.200l6 6"/></svg>
    <svg class="od" width="20" height="14" viewBox="0 0 20 14"><path d="M4 10a5 5 0 0 1 1-7 6 6 0 0 1 10 1l2 6z" fill="#8f8f8f"/><path d="M3 13.500A3.800 3.800 0 0 1 4 6l5 1 5 3-7 3.500z" fill="#bdbdbd"/><path d="M3 13.500c3-3.500 5-6 9-7 2-.5 4 0 4.500 1.200A3 3 0 0 1 17 13.500z" fill="#fff"/></svg>
    <div class="lang"><p>ENG</p><p>IN</p></div>
    <svg class="wifi" width="20" height="16" viewBox="0 0 20 16" fill="none" stroke="#fff" stroke-width="1.500"><path d="M.700 5.500a13.500 13.500 0 0 1 18.600 0M3.500 8.700a9.500 9.500 0 0 1 13 0M6.200 11.600a5.500 5.500 0 0 1 7.600 0"/><circle cx="10" cy="14" r="1.600" fill="#fff" stroke="none"/></svg>
    <svg class="spk" width="20" height="16" viewBox="0 0 20 16" fill="none" stroke="#fff" stroke-width="1.400"><path d="M.7 5.200h3L8 1.200v13.600l-4.300-4h-3zM10.500 5c1.200 1.800 1.200 4.200 0 6M13 3c2.200 3 2.200 7 0 10"/><path d="M15.500 1c3.500 4 3.500 10 0 14" stroke="#777"/></svg>
    <svg class="bat" width="21" height="13" viewBox="0 0 21 13"><rect x=".8" y=".8" width="16.500" height="11.400" rx="2.500" fill="none" stroke="#fff" stroke-width="1.500"/><path d="M3 3h4.500v7H3zM18.500 4l2 1v3l-2 1z" fill="#fff"/></svg>
    <div class="clock"><p>13:20</p><p>25-02-2024</p></div>
    <svg class="bell" width="17" height="20" viewBox="0 0 17 20" fill="#8fe3fb"><path d="M8.500 0a6.500 6.500 0 0 1 6.500 6.500V11l2 4c.2.600 0 1-.7 1H.7c-.7 0-.9-.4-.7-1l2-4V6.500A6.500 6.500 0 0 1 8.500 0zM5.500 17h6a3 3 0 0 1-6 0z"/></svg>
    <svg width="30" height="29" viewBox="0 0 30 29"><use href="#copilot" width="28" height="28"/><rect x="7" y="19" width="22" height="9.500" rx="2" fill="#ffc917"/><text x="9.500" y="26.800" font-family="Open Sans" font-size="8.500" font-weight="800" fill="#111" textLength="17">PRE</text></svg>
  </div>
</div>
</body>
</html>
```
FILE: styles.css
```css
* { box-sizing: border-box; }
body { margin: 0; width: 1920px; height: 1080px; overflow: hidden; display: flex; flex-direction: column; background: #f7f7f7; font: 14.700px "Open Sans", sans-serif; letter-spacing: -.33px; color: #000; }
p { margin: 0; }
svg { display: block; flex: none; }
.defs { position: absolute; }

/* browser chrome */
.tabs { height: 40px; flex: none; display: flex; background: #cdcdcd; box-shadow: inset 0 -1px 1px #b5b5b5; }
.tabtools { width: 159px; display: flex; align-items: center; padding-left: 13px; }
.t2 { margin-left: 24px; }
.t3 { margin-left: 31px; }
.tab { width: 249px; padding: 0 13px 1px 14px; display: flex; align-items: center; white-space: nowrap; }
.tab span { margin-left: 12px; overflow: hidden; }
.tab .fade { width: 172px; -webkit-mask: linear-gradient(90deg, #000 85%, transparent); mask: linear-gradient(90deg, #000 85%, transparent); }
.tab .cl { margin-left: auto; }
.tab .cl { position: relative; top: 1px; }
.first, .sep { background: linear-gradient(#777, #777) 0 8px / 1.5px 24px no-repeat; }
.active { background: #f7f7f7; border-radius: 8px 8px 0 0; width: 252px; margin-right: -2px; padding-right: 14px; }
.newtab { padding: 11px 0 0 14px; background: linear-gradient(#777, #777) 0 8px / 1.5px 24px no-repeat; }
.wincontrols { margin-left: auto; display: flex; align-items: center; gap: 44px; padding-right: 22px; }
.toolbar { height: 48px; flex: none; display: flex; align-items: center; }
.back { margin-left: 24px; }
.reload { margin-left: 34px; }
.address { margin-left: 24px; width: 1399px; height: 37px; border-radius: 19px; background: #fff; box-shadow: 0 1px 4px #ddd; display: flex; align-items: center; padding: 0 21px 0 25px; }
.url { margin-left: 20px; color: #757575; font-size: 17px; letter-spacing: -.22px; flex: 1; padding-bottom: 2px; }
.url b { font-weight: 400; color: #000; }
.fav { margin-left: 29px; }
.tools { display: flex; align-items: center; padding-left: 26px; flex: 1; }
.tools i { width: 1px; height: 20px; background: #c4c4c4; margin: 0 19px 0 20px; }
.w { margin-left: 35px; }
.w2 { margin-left: 34px; }
.w3 { margin-left: 35px; }
.w4 { margin-left: 35px; }
.w5 { margin-left: 29px; }
.bookmarks { height: 42px; flex: none; display: flex; align-items: center; padding-bottom: 2px; }
.bm { display: flex; align-items: center; gap: 10px; white-space: nowrap; flex: none; }
.bm span { padding-bottom: 1px; }
.imp { width: 167px; padding-left: 17px; height: 20px; border-right: 1px solid #c8c8c8; }
.b1 { width: 134px; padding-left: 12px; }
.b2 { width: 120px; }
.b3 { width: 187px; }
.b4 { width: 172px; }
.b5 { width: 193px; }
.b6 { width: 107px; }

/* page viewport */
.main { height: 885px; flex: none; display: flex; }
.page { margin-left: 5px; width: 1860px; height: 885px; overflow: hidden; background: #fff; border-radius: 10px; box-shadow: 0 0 3px #c4c4c4; display: flex; justify-content: space-between; font: 17.7px "DejaVu Sans", sans-serif; letter-spacing: 0; }
.content { margin-left: 188px; width: 1465px; flex: none; }
.content a { color: #00c; text-decoration: underline; }
.head { height: 104px; display: flex; justify-content: space-between; padding-top: 27px; }
.auth { line-height: 22px; margin-top: -5px; white-space: nowrap; }
.flags { display: flex; gap: 6px; justify-content: flex-end; margin-bottom: 9px; }
.links { word-spacing: 1.400px; }
.content .menu a, .content .sub a { color: #000; text-decoration: none; font-family: "Open Sans", sans-serif; }
.menu { height: 55px; border: 1px solid #b9b9b9; border-radius: 8px; display: flex; align-items: center; padding-left: 22px; }
.menu a { font-size: 19px; font-stretch: 75%; letter-spacing: .35px; white-space: nowrap; flex: none; }
.m1 { width: 63px; } .m2 { width: 48px; } .m3 { width: 81px; } .m4 { width: 90px; } .m5 { width: 52px; } .m6 { width: 114.500px; } .m7 { width: 76.500px; } .m8 { width: 71px; } .m9 { width: 49px; } .m10 { width: 44px; } .m11 { width: 94px; } .m12 { width: 40px; }
.search { margin: 0 12px 1px auto; width: 141px; height: 25px; border: 1px solid #d3d3d3; background: #f3f3f3; padding: 3px 0 0 2px; }
.sub { margin: 24px 0 0 -9px; height: 25px; display: flex; align-items: center; }
.sub a { font-size: 14px; font-weight: 700; font-stretch: 75%; line-height: 29px; height: 25px; }
.sub .on { width: 108px; padding-left: 10px; background: #b9b9b9; border-radius: 6px; }
.s2 { width: 48px; margin-left: 9px; } .s3 { width: 57.500px; } .s4 { width: 95px; }
.cols { display: flex; justify-content: space-between; margin-top: 8px; }
.card { width: 1098px; border: 1px solid #b9b9b9; border-radius: 8px; }
.profile { height: 412px; display: flex; justify-content: space-between; padding: 17px 18px 0; }
.info { line-height: 40px; word-spacing: .500px; }
.rank { font-weight: 700; color: gray; line-height: 24px; }
.name { font: 700 31px/37px "Liberation Sans", sans-serif; color: gray; margin-bottom: 8px; }
.row { height: 48px; display: flex; align-items: center; gap: 15px; white-space: pre; }
.row b { color: gray; }
.row small { font-size: 14.200px; }
.up { padding-bottom: 2px; }
.cm { height: 40px; gap: 13px; }
.tk { height: 52px; gap: 15px; }
.avatar { width: 408px; height: 284px; border: 1px solid #b9b9b9; padding: 68px 0 0 137px; }
.graph { margin-top: 17px; height: 300px; }
.graph select { display: block; margin: 10px 25px 0 auto; width: 96px; height: 23px; font: 12.500px "DejaVu Sans", sans-serif; background: #fff; border: 1px solid #666; border-radius: 1px; padding: 0 0 0 2px; }
.plot { margin-top: 9px; }

/* page sidebar */
.right { width: 350px; }
.box { border: 1px solid #b9b9b9; border-radius: 8px 8px 0 0; overflow: hidden; }
.box h3 { margin: 0; height: 34px; line-height: 33px; border-bottom: 1px solid #b9b9b9; color: #3b5998; font-size: 18.700px; padding-left: 9px; display: flex; }
.box h3 i { font: 400 22px/33px "Liberation Serif", serif; width: 26px; margin-left: -1px; }
.attention { height: 147px; }
.body { display: flex; flex-direction: column; align-items: center; padding-top: 15px; line-height: 22px; }
.body strong { color: #3b5998; font-size: 18.500px; }
.body em { font-style: normal; color: gray; }
.rated { margin-top: 26px; height: 409px; }
table { border-collapse: collapse; width: 348px; table-layout: fixed; }
th { height: 35px; padding: 4px 0 0; border-bottom: 1px solid #b9b9b9; font-size: 17.700px; }
td { height: 31px; padding: 0; text-align: center; font-size: 16px; border-bottom: 1px solid #b9b9b9; }
.n { width: 49px; } .r { width: 98px; }
th + th, td + td { border-left: 1px solid #b9b9b9; }
tr:nth-child(even) td { background: #f5f5f5; }
.u { color: red; font: 700 15.700px "Liberation Sans", sans-serif; }
.u b { color: #000; }
.foot { background: #f5f5f5; height: 29px; line-height: 26px; display: flex; justify-content: space-between; padding: 0 7px; font-family: "Liberation Sans", sans-serif; font-size: 13.800px; word-spacing: .800px; }
.foot > a { word-spacing: -1px; }
.contrib { margin-top: 26px; }
.contrib h3 { height: 35px; }
.scroll { width: 19px; background: #fcfcfc; display: flex; flex-direction: column; align-items: center; padding: 10px 0 9px; }
.thumb { width: 11px; height: 232px; border-radius: 6px; background: #8b8b8b; margin: 9px 0 auto; }

/* browser side rail */
.side { width: 55px; display: flex; flex-direction: column; align-items: center; margin-top: -27px; padding: 1px 1px 0 0; height: 912px; }
.side > svg { height: 22px; margin-bottom: 28.200px; }
.side hr { width: 35px; border: 0; border-top: 1px solid #bbb; margin: 0 0 32px; }
.side .plus { height: 15px; margin: 0; }
.side .low { margin: auto 0 17px; }
.side .gear { margin-bottom: 11px; }

/* taskbar */
.taskbar { margin-top: 5px; height: 60px; background: #202020; border-top: 1px solid #484848; display: flex; color: #fff; line-height: 20px; letter-spacing: -.1px; }
.weather { width: 493px; padding: 8px 0 0 25px; display: flex; gap: 9px; white-space: nowrap; }
.weather svg { margin-top: 9px; }
.dim { color: #c4c4c4; }
.start { margin-top: 15px; }
.find { margin: 10px 0 0 18px; width: 273px; height: 38px; border-radius: 19px; background: #f2f2f2; color: #5a5a5a; display: flex; align-items: center; padding: 0 4px 0 14px; font-size: 16.500px; }
.find span { flex: 1; margin-left: 12px; }
.apps { margin: 4px 0 0 6px; display: flex; gap: 5px; }
.apps > div { width: 50px; height: 50px; display: flex; align-items: center; justify-content: center; position: relative; }
.apps .cur { background: #2e2e2e; border-radius: 5px; }
.cur::after { content: ""; position: absolute; left: 15px; bottom: 1px; width: 20px; height: 4px; border-radius: 2px; background: #4cc2ff; }
.dot { position: absolute; right: 4px; top: 4px; width: 20px; height: 20px; border-radius: 10px; background: #ffc20e; }
.blue { background: #4cc2ff; color: #111; font-weight: 400; text-align: center; }
.tray { margin: -2px 0 0 87px; display: flex; align-items: center; font-size: 15px; letter-spacing: 0; }
.od { margin-left: 23px; }
.lang { margin-left: 22px; width: 32px; text-align: center; }
.wifi { margin-left: 21px; }
.spk { margin-left: 10px; }
.bat { margin-left: 10px; }
.clock { width: 97px; text-align: right; }
.bell { margin-left: 11px; margin-right: 22px; }
```
